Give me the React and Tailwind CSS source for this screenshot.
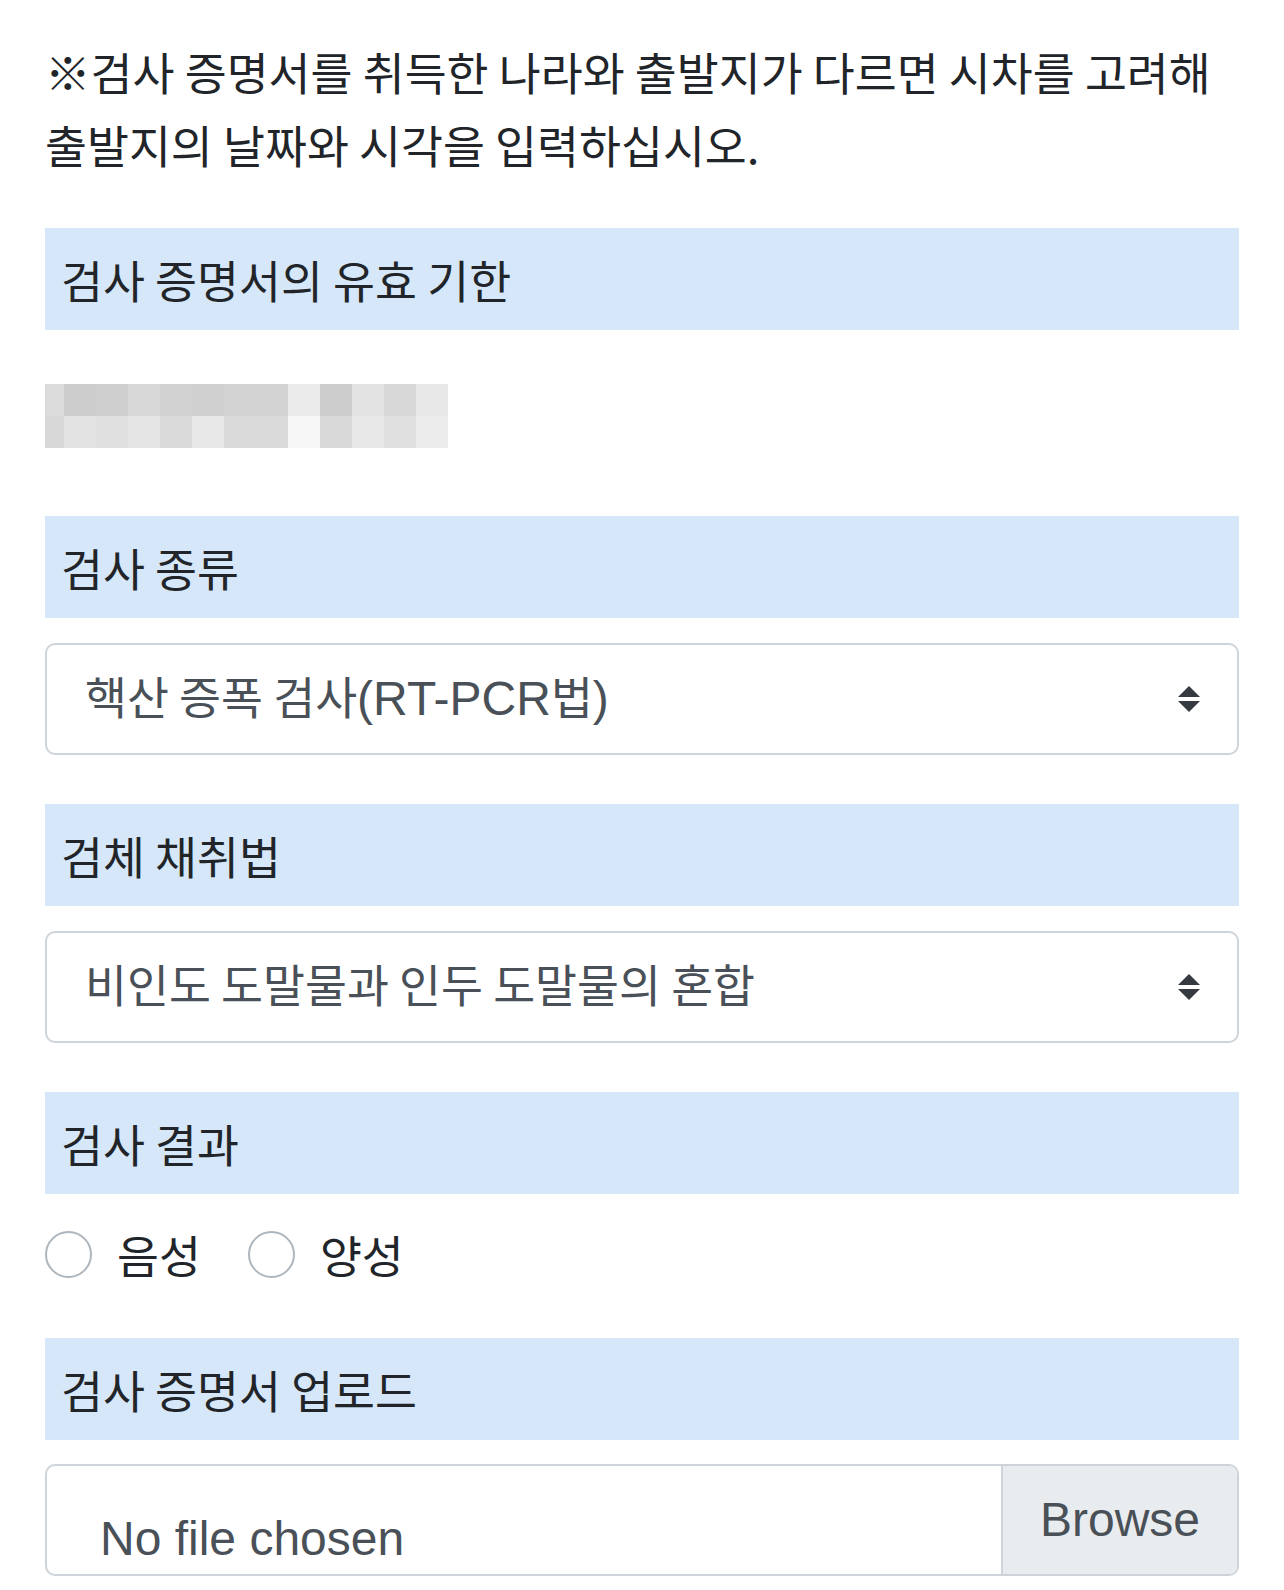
import React from 'react';

const KO = "font-['Noto_Sans_CJK_KR','Noto_Sans',sans-serif] text-[45.6px]";
const LATIN = "font-['Liberation_Sans',Arial,sans-serif] text-[48px]";

// blurred date value: two rows of mosaic cells
const topRow = [
  'bg-[#dcdcdc]', 'bg-[#cdcdcd]', 'bg-[#cfcfcf]', 'bg-[#d8d8d8]', 'bg-[#d2d2d2]', 'bg-[#d0d0d0]', 'bg-[#d3d3d3]',
  'bg-[#d3d3d3]', 'bg-[#ebebeb]', 'bg-[#cccccd]', 'bg-[#e3e3e3]', 'bg-[#d8d8d8]', 'bg-[#e8e8e8]',
];
const bottomRow = [
  'bg-[#d8d8d8]', 'bg-[#e3e3e3]', 'bg-[#e0e0e0]', 'bg-[#e5e5e5]', 'bg-[#dadada]', 'bg-[#e8e8e8]', 'bg-[#dadada]',
  'bg-[#dadada]', 'bg-[#f7f7f7]', 'bg-[#d9d9d9]', 'bg-[#e8e8e8]', 'bg-[#e0e0e0]', 'bg-[#ececec]',
];

const SectionBar = ({ children, className = '' }) => (
  <div className={`h-[102px] bg-[#d5e7f8] flex items-center pl-4 ${className}`}>
    <span className={`${KO} leading-[73px] text-[#212529]`}>{children}</span>
  </div>
);

const UpDown = () => (
  <svg width="24" height="30" viewBox="0 0 24 30" className="shrink-0">
    <path d="M12 2 L23 13 L1 13 Z" fill="#343a40" />
    <path d="M1 17 L23 17 L12 28 Z" fill="#343a40" />
  </svg>
);

const SelectBox = ({ children }) => (
  <div className="h-[112px] border-2 border-[#ced4da] rounded-[10px] bg-white flex items-center justify-between pl-[38px] pr-[36px]">
    <span className="leading-[73px] text-[#495057] mt-[6px]">{children}</span>
    <UpDown />
  </div>
);

const Radio = ({ label }) => (
  <label className="flex items-center gap-[25px]">
    <span className="w-[47px] h-[47px] rounded-full border-2 border-[#adb5bd] bg-white shrink-0" />
    <span className={`${KO} leading-[73px] text-[#212529]`}>{label}</span>
  </label>
);

export default function App() {
  return (
    <div className="min-h-[1590px] bg-white px-[45px] pt-[35px] overflow-hidden">
      <p className={`${KO} leading-[73px] text-[#212529]`}>
        ※검사 증명서를 취득한 나라와 출발지가 다르면 시차를 고려해
        <br />
        출발지의 날짜와 시각을 입력하십시오.
      </p>

      <SectionBar className="mt-[47px]">검사 증명서의 유효 기한</SectionBar>

      <div className="mt-[54px] flex flex-col w-[403px]">
        <div className="flex h-[32px]">
          {topRow.map((c, i) => (
            <div key={i} className={`${c} h-full ${i === 0 ? 'w-[19px]' : 'w-[32px]'}`} />
          ))}
        </div>
        <div className="flex h-[32px]">
          {bottomRow.map((c, i) => (
            <div key={i} className={`${c} h-full ${i === 0 ? 'w-[19px]' : 'w-[32px]'}`} />
          ))}
        </div>
      </div>

      <SectionBar className="mt-[68px]">검사 종류</SectionBar>
      <div className="mt-[25px]">
        <SelectBox>
          <span className={KO}>핵산 증폭 검사</span>
          <span className={LATIN}>(RT-PCR</span>
          <span className={KO}>법</span>
          <span className={LATIN}>)</span>
        </SelectBox>
      </div>

      <SectionBar className="mt-[49px]">검체 채취법</SectionBar>
      <div className="mt-[25px]">
        <SelectBox>
          <span className={KO}>비인도 도말물과 인두 도말물의 혼합</span>
        </SelectBox>
      </div>

      <SectionBar className="mt-[49px]">검사 결과</SectionBar>
      <div className="mt-[24px] flex items-center gap-[47px] h-[73px]">
        <Radio label="음성" />
        <Radio label="양성" />
      </div>

      <SectionBar className="mt-[47px]">검사 증명서 업로드</SectionBar>
      <div className="mt-[24px] h-[112px] border-2 border-[#ced4da] rounded-[10px] bg-white flex overflow-hidden">
        <div className="flex-1 pl-[53px] pt-[37px]">
          <span className={`${LATIN} leading-[72px] text-[#495057] block`}>No file chosen</span>
        </div>
        <div className="w-[236px] bg-[#e9ecef] border-l-2 border-[#ced4da] flex items-center justify-center">
          <span className={`${LATIN} leading-[72px] text-[#495057]`}>Browse</span>
        </div>
      </div>
    </div>
  );
}
